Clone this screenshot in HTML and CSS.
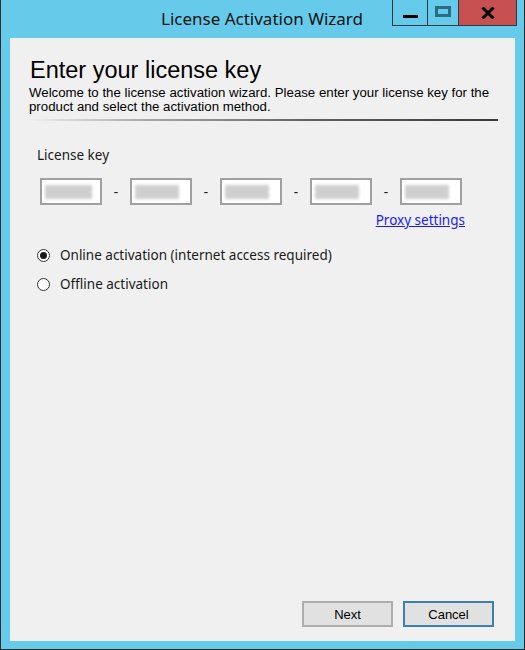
FILE: index.html
```html
<!DOCTYPE html>
<html lang="en">
<head>
<meta charset="UTF-8">
<title>License Activation Wizard</title>
<link rel="stylesheet" href="styles.css">
</head>
<body>
<div class="window">
    <div class="titlebar">
        <div></div>
        <div class="title">License Activation Wizard</div>
        <div class="controls">
            <span class="ctl ctl-min"><span class="min-bar"></span></span>
            <span class="ctl ctl-max"><span class="max-box"></span></span>
            <span class="ctl ctl-close">
                <svg width="14" height="12" viewBox="0 0 14 12"><path d="M1.5 0.5 L12.5 11.5 M12.5 0.5 L1.5 11.5" stroke="#000" stroke-width="3"/></svg>
            </span>
        </div>
    </div>

    <div class="client">
        <div class="header">
            <h1>Enter your license key</h1>
            <p>Welcome to the license activation wizard. Please enter your license key for the product and select the activation method.</p>
            <div class="divider"></div>
        </div>

        <div class="body">
            <div class="label">License key</div>
            <div class="keyblock">
                <div class="keyrow">
                    <div class="keybox"><span class="blur w1"></span></div>
                    <span class="dash">-</span>
                    <div class="keybox"><span class="blur w2"></span></div>
                    <span class="dash">-</span>
                    <div class="keybox"><span class="blur w2"></span></div>
                    <span class="dash">-</span>
                    <div class="keybox"><span class="blur w2"></span></div>
                    <span class="dash">-</span>
                    <div class="keybox"><span class="blur w2"></span></div>
                </div>
                <div class="proxy"><a href="#">Proxy settings</a></div>
            </div>

            <div class="options">
                <label class="option"><span class="radio checked"></span>Online activation (internet access required)</label>
                <label class="option"><span class="radio"></span>Offline activation</label>
            </div>
        </div>

        <div class="footer">
            <button class="btn">Next</button>
            <button class="btn focused">Cancel</button>
        </div>
    </div>
</div>
</body>
</html>
```

FILE: styles.css
```css
body {
    margin: 0;
    padding: 0;
    background-color: #66cbea;
}

.window {
    width: 525px;
    height: 650px;
    box-sizing: border-box;
    background-color: #66cbea;
    border-left: 1px solid #2b2b2b;
    border-right: 1px solid #2b2b2b;
    border-bottom: 1px solid #2b2b2b;
    padding: 0 9px 8px 9px;
    display: flex;
    flex-direction: column;
}

/* title bar */
.titlebar {
    height: 38px;
    flex: none;
    display: grid;
    grid-template-columns: 1fr auto 1fr;
    margin: 0 -8px 0 -9px;
}

.title {
    font-family: "Noto Sans", sans-serif;
    font-size: 17px;
    color: #111;
    padding-top: 7px;
}

.controls {
    display: flex;
    justify-content: flex-end;
    align-items: flex-start;
    padding-right: 6px;
}

.ctl {
    height: 25px;
    border: 1px solid #2b3a40;
    border-top: none;
    border-right: none;
    display: flex;
    align-items: center;
    justify-content: center;
}

.ctl-min { width: 34px; }
.ctl-max { width: 30px; }
.ctl-close {
    width: 57px;
    background-color: #c75050;
    border-right: 1px solid #2b3a40;
}

.min-bar {
    width: 15px;
    height: 3px;
    background-color: #000;
    margin-top: 8px;
}

.max-box {
    width: 10px;
    height: 5px;
    border: 3px solid #2c6d86;
    margin-top: -2px;
}

/* client area */
.client {
    flex: 1;
    background-color: #f0f0f0;
    display: flex;
    flex-direction: column;
}

.header {
    padding: 19px 17px 0 19px;
}

h1 {
    font-family: "Liberation Sans", Arial, sans-serif;
    font-weight: normal;
    font-size: 23.5px;
    line-height: 26px;
    color: #000;
    margin: 0 0 3px 1px;
}

.header p {
    font-family: "Liberation Sans", Arial, sans-serif;
    font-size: 13.25px;
    line-height: 14px;
    color: #000;
    margin: 0;
}

.divider {
    height: 2px;
    margin: 5px 0 0 -1px;
    background: linear-gradient(to right, #f0f0f0, #a8a8a8 25%, #606060 60%, #3a3a3a);
}

.body {
    padding: 25px 0 0 27px;
    font-family: "Noto Sans", sans-serif;
    font-size: 13.5px;
    color: #1a1a1a;
}

.label {
    line-height: 18px;
}

.keyblock {
    display: inline-block;
    margin: 14px 0 0 3px;
}

.keyrow {
    display: flex;
    align-items: center;
}

.keybox {
    width: 55px;
    height: 23px;
    border: 2px solid #a0a0a0;
    background-color: #fff;
    display: flex;
    align-items: center;
    padding-left: 3px;
}

.blur {
    height: 14px;
    background-color: #cfcfcf;
    filter: blur(1.5px);
}
.w1 { width: 47px; }
.w2 { width: 44px; }

.dash {
    width: 28px;
    text-align: center;
    line-height: 12px;
}

.proxy {
    text-align: right;
    margin: 6px -3px 0 0;
    line-height: 18px;
}

.proxy a {
    color: #1a1aff;
    text-decoration: underline;
}

.options {
    margin: 17px 0 0 0;
    display: flex;
    flex-direction: column;
    gap: 11px;
}

.option {
    display: flex;
    align-items: center;
    line-height: 18px;
}

.radio {
    width: 11px;
    height: 11px;
    border: 1px solid #333;
    border-radius: 50%;
    background-color: #fff;
    margin-right: 10px;
    display: flex;
    align-items: center;
    justify-content: center;
}

.radio.checked::after {
    content: "";
    width: 7px;
    height: 7px;
    border-radius: 50%;
    background-color: #1a1a1a;
}

.footer {
    margin-top: auto;
    display: flex;
    justify-content: flex-end;
    gap: 10px;
    padding: 0 21px 14px 0;
}

.btn {
    width: 91px;
    height: 26px;
    font-family: "Liberation Sans", Arial, sans-serif;
    font-size: 13px;
    color: #000;
    background-color: #e1e1e1;
    border: 1px solid #adadad;
    outline: 1px solid #adadad;
    outline-offset: -2px;
    padding: 0;
}

.btn.focused {
    border-color: #3c7fb1;
    outline-color: #3c7fb1;
}
```
